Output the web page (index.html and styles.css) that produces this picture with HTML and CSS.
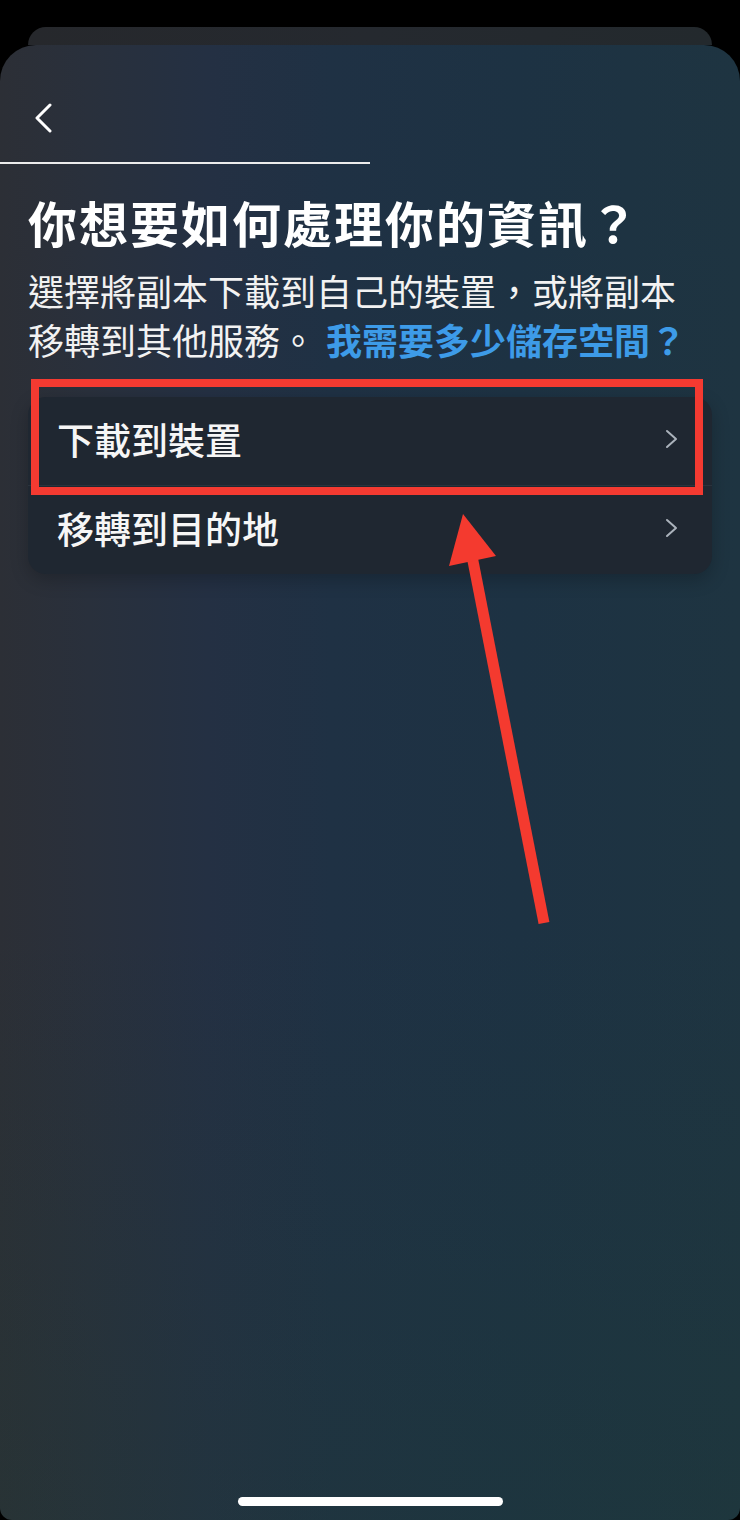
FILE: index.html
```html
<!DOCTYPE html>
<html lang="zh-Hant">
<head>
<meta charset="utf-8">
<title>你想要如何處理你的資訊？</title>
<link rel="stylesheet" href="styles.css">
</head>
<body>
<div class="page">
  <div class="sheet-back"></div>
  <main class="sheet">
    <header class="header">
      <button class="back" aria-label="返回">
        <svg width="20" height="30" viewBox="0 0 20 30"><polyline points="17,2 4,15 17,28" fill="none" stroke="#ffffff" stroke-width="3" stroke-linecap="round" stroke-linejoin="round"/></svg>
      </button>
    </header>
    <div class="progress"></div>
    <section class="content">
      <h1 class="title">你想要如何處理你的資訊？</h1>
      <div class="subtitle">
        <span class="sub-line">選擇將副本下載到自己的裝置，或將副本</span>
        <div class="sub-line2">
          <span>移轉到其他服務。</span>
          <a class="link">我需要多少儲存空間？</a>
        </div>
      </div>
      <div class="card">
        <div class="row">
          <span class="row-label">下載到裝置</span>
          <svg class="chev" width="14" height="20" viewBox="0 0 14 20"><polyline points="2,2 11,10 2,18" fill="none" stroke="#aab2bb" stroke-width="2" stroke-linecap="round" stroke-linejoin="round"/></svg>
        </div>
        <div class="divider"></div>
        <div class="row">
          <span class="row-label">移轉到目的地</span>
          <svg class="chev" width="14" height="20" viewBox="0 0 14 20"><polyline points="2,2 11,10 2,18" fill="none" stroke="#aab2bb" stroke-width="2" stroke-linecap="round" stroke-linejoin="round"/></svg>
        </div>
      </div>
    </section>
    <div class="spacer"></div>
    <div class="home-indicator"></div>
  </main>
  <div class="highlight"></div>
  <svg class="arrow" width="740" height="1520" viewBox="0 0 740 1520">
    <line x1="472" y1="556" x2="544" y2="923" stroke="#f43a2f" stroke-width="11"/>
    <polygon points="463,514 449,566 496,556" fill="#f43a2f"/>
  </svg>
</div>
</body>
</html>
```
FILE: styles.css
```css
* { box-sizing: border-box; }
html, body {
  margin: 0;
  padding: 0;
  background: #000;
}
body {
  font-family: "Noto Sans CJK TC", "Noto Sans", "Liberation Sans", sans-serif;
  color: #f4f4f4;
}
.page {
  position: relative;
  width: 740px;
  height: 1520px;
  overflow: hidden;
  padding-top: 27px;
  display: flex;
  flex-direction: column;
}
.sheet-back {
  margin: 0 28px;
  height: 18px;
  border-radius: 22px 22px 0 0;
  background: linear-gradient(90deg, #26282c 0%, #25292f 50%, #23292d 100%);
  flex: none;
}
.sheet {
  flex: 1;
  display: flex;
  flex-direction: column;
  border-radius: 36px 36px 12px 12px;
  background:
    linear-gradient(180deg, rgba(0,0,0,0) 60%, rgba(30,60,52,0.3) 100%),
    linear-gradient(90deg, #2c2f36 0%, #29303c 12%, #243043 28%, #1f3144 45%, #1d3243 70%, #1e3441 100%);
}
.header {
  padding: 58px 0 0 33px;
  height: 88px;
  flex: none;
}
.back {
  display: block;
  padding: 0;
  margin: 0;
  border: 0;
  background: none;
  width: 20px;
  height: 30px;
}
.back svg { display: block; }
.progress {
  margin-top: 29px;
  width: 370px;
  height: 2px;
  background: #ececec;
  flex: none;
}
.content {
  padding: 0 28px;
  flex: none;
}
.title {
  margin: 28px 0 0;
  font-size: 49px;
  line-height: 60px;
  font-weight: 700;
  letter-spacing: 2px;
  color: #ffffff;
  white-space: nowrap;
}
.subtitle {
  margin: 14px 0 0;
  font-size: 36px;
  line-height: 49px;
  font-weight: 400;
  color: #f2f2f2;
}
.sub-line {
  display: block;
  white-space: nowrap;
}
.sub-line2 {
  display: flex;
  gap: 10px;
  white-space: nowrap;
}
.link {
  color: #3d9be8;
  font-weight: 700;
}
.card {
  margin-top: 33px;
  background: #1f2731;
  border-radius: 18px;
  box-shadow: 0 6px 18px rgba(0,0,0,0.22);
  overflow: hidden;
}
.row {
  height: 88px;
  display: flex;
  align-items: center;
  justify-content: space-between;
  padding: 0 33px 4px 29px;
}
.row-label {
  font-size: 37px;
  font-weight: 500;
  color: #f6f6f6;
}
.chev { display: block; }
.divider {
  height: 1px;
  background: #2a333d;
}
.spacer { flex: 1; }
.home-indicator {
  align-self: center;
  width: 265px;
  height: 9px;
  border-radius: 5px;
  background: #ffffff;
  margin-bottom: 14px;
  flex: none;
}
.highlight {
  position: absolute;
  left: 31px;
  top: 379px;
  width: 672px;
  height: 116px;
  border: 8px solid #f43a31;
}
.arrow {
  position: absolute;
  left: 0;
  top: 0;
  pointer-events: none;
}
```
